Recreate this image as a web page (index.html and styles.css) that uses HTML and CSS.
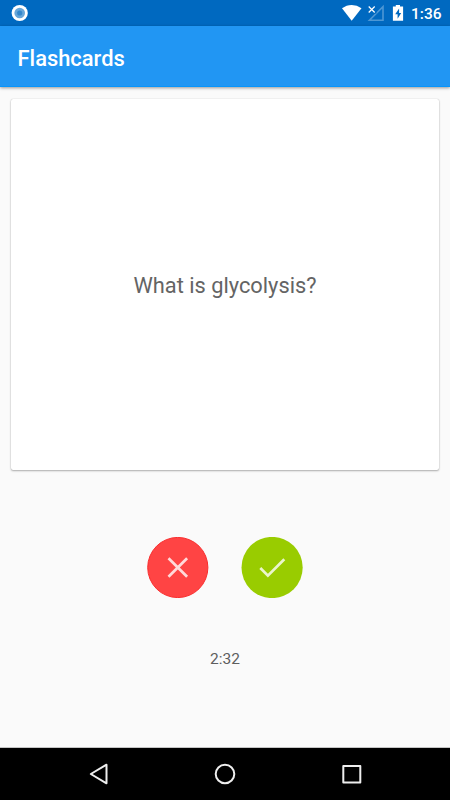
FILE: index.html
```html
<!DOCTYPE html>
<html lang="en">
<head>
<meta charset="utf-8">
<title>Flashcards</title>
<link rel="stylesheet" href="styles.css">
</head>
<body>
<div class="screen">
  <div class="status-bar">
    <svg class="status-record" width="18" height="18" viewBox="0 0 18 18"><circle cx="8.700" cy="9" r="8.100" fill="#fff"/><circle cx="8.700" cy="9" r="5.300" fill="#66a6d9"/><circle cx="8.700" cy="9" r="2.600" fill="#3387cc"/></svg>
    <svg class="status-icons" width="64" height="26" viewBox="0 0 64 26">
      <path d="M2 8.300Q6.500 4.900 11.700 4.900T21.500 8.300L11.700 20.700Z" fill="#fff"/>
      <path d="M43 6.700V20.200H29.500Z" fill="none" stroke="#4d97d4" stroke-width="1.600"/>
      <path d="M27 4H36.500V13.500H27Z" fill="#0069c0"/>
      <path d="M28.700 6.500L34.700 12.500M34.700 6.500L28.700 12.500" stroke="#fff" stroke-width="1.200"/>
      <path d="M55.800 5H60V6.600H63.100V20.800H52.900V6.600H55.800Z" fill="#fff"/>
      <path d="M59.100 8.600L55.200 14.200H57.600V18.700L61.200 12.900H59.100Z" fill="#0069c0"/>
    </svg>
    <span class="clock">1:36</span>
  </div>
  <header class="app-bar"><h1>Flashcards</h1></header>
  <main>
    <section class="card"><p>What is glycolysis?</p></section>
    <div class="actions">
      <button class="action wrong" aria-label="Incorrect"><svg width="62" height="61" viewBox="0 0 62 61"><circle cx="30.800" cy="30.500" r="30.100" fill="#ff4444" stroke="#f92d2d"/><path d="M21.500 21.200L40.100 39.800M40.100 21.200L21.500 39.800" stroke-width="2.700"/></svg></button>
      <button class="action right" aria-label="Correct"><svg width="62" height="61" viewBox="0 0 62 61"><circle cx="31.100" cy="30.500" r="30.600" fill="#99cc00"/><path d="M19.300 31L26.900 38.700L43.300 22.300" stroke-width="2.700"/></svg></button>
    </div>
    <p class="timer">2:32</p>
  </main>
  <nav class="nav-bar">
    <svg width="450" height="52" viewBox="0 0 450 52" fill="none" stroke="#eee" stroke-width="2" stroke-linejoin="round"><path d="M106.500 16.700V35.300L90.800 26Z"/><circle cx="225" cy="26" r="9.300"/><path d="M343.300 18H360.300V34.600H343.300Z"/></svg>
  </nav>
</div>
</body>
</html>
```
FILE: styles.css
```css
* { box-sizing: border-box; }
body { margin: 0; font-family: Roboto, sans-serif; background: #fafafa; }
h1, p { margin: 0; }
svg { display: block; }
.screen { width: 450px; height: 800px; display: flex; flex-direction: column; overflow: hidden; }
.status-bar { height: 26px; flex: none; display: flex; align-items: center; padding: 0 9px 0 11px; background: #0069c0; color: #fff; }
.status-icons { margin-left: auto; margin-right: 7px; }
.clock { width: 30px; font-size: 15.5px; font-weight: 500; line-height: 26px; padding-top: 2px; }
.app-bar { height: 61px; flex: none; display: flex; align-items: center; padding: 4px 17.5px 0; background: #2196f3; border-bottom: 1px solid #0795fb; color: #fff; box-shadow: 0 1px 3px rgba(0, 0, 0, .4); }
.app-bar h1 { font-size: 21.9px; font-weight: 500; }
main { flex: 1; display: flex; flex-direction: column; align-items: center; padding-top: 11.5px; }
.card { width: 428px; height: 371px; flex: none; display: flex; align-items: center; justify-content: center; padding-top: 2px; background: #fff; border-radius: 2px; box-shadow: 0 0 1px rgba(0, 0, 0, .25), 0 1px 2px rgba(0, 0, 0, .3); color: #646464; font-size: 21.8px; }
.actions { display: flex; gap: 32px; margin-top: 67.5px; }
.action { width: 62px; height: 61px; padding: 0; border: 0; background: none; }
.action path { fill: none; stroke: #fff; stroke-opacity: .8; }
.timer { margin-top: 50.5px; color: #5e5e5e; font-size: 15.5px; line-height: 20px; }
.nav-bar { height: 52px; flex: none; background: #000; box-shadow: 0 -1px 0 #c4c4c4; }
```
